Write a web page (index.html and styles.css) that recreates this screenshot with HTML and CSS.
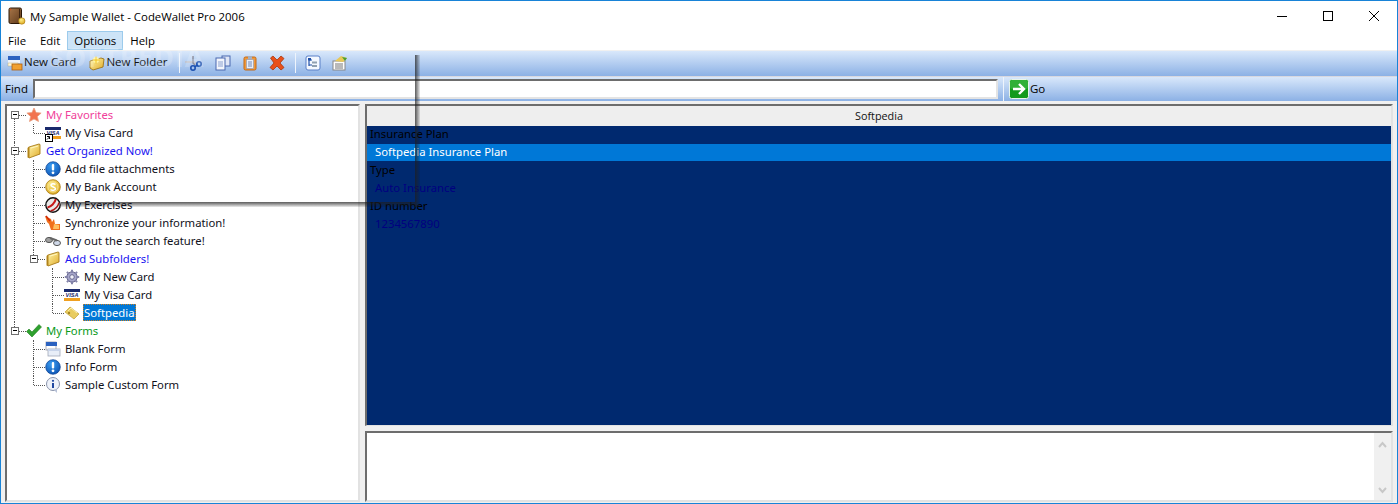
FILE: index.html
```html
<!DOCTYPE html>
<html lang="en">
<head>
<meta charset="utf-8">
<title>My Sample Wallet - CodeWallet Pro 2006</title>
<link rel="stylesheet" href="styles.css">
</head>
<body>
<svg class="defs" width="0" height="0" aria-hidden="true">
  <defs>
    <linearGradient id="gFolder" x1="0" y1="0" x2="1" y2="1"><stop offset="0" stop-color="#fff4a8"/><stop offset="1" stop-color="#e0ac2c"/></linearGradient>
    <linearGradient id="gWallet" x1="0" y1="0" x2="1" y2="1"><stop offset="0" stop-color="#a87648"/><stop offset="1" stop-color="#5e3a1c"/></linearGradient>
    <radialGradient id="gBlue" cx=".4" cy=".3" r=".8"><stop offset="0" stop-color="#3a9cf0"/><stop offset="1" stop-color="#0a4fb0"/></radialGradient>
    <radialGradient id="gCoin" cx=".4" cy=".3" r=".8"><stop offset="0" stop-color="#fff08a"/><stop offset="1" stop-color="#d8a016"/></radialGradient>
    <symbol id="i-star" viewBox="0 0 16 16"><path d="M8 1l2.100 4.600 5 .5-3.700 3.400 1.100 5L8 12l-4.500 2.500 1.100-5L.9 6.100l5-.5z" fill="#f2744f" stroke="#e8a080" stroke-width=".8"/></symbol>
    <symbol id="i-visa" viewBox="0 0 16 16"><rect y="2" width="16" height="12" fill="#fff"/><rect y="2" width="16" height="3" fill="#1a2a6c"/><rect y="11" width="16" height="3" fill="#f0a020"/><text x="8" y="10" font-size="5.500" font-weight="700" font-style="italic" text-anchor="middle" fill="#1a2a6c" font-family="Liberation Sans, sans-serif">VISA</text></symbol>
    <symbol id="i-shortcut" viewBox="0 0 8 8"><rect x=".5" y=".5" width="7" height="7" fill="#fff" stroke="#000"/><path d="M2.500 6V3.500h2.500M3 3.500L5.500 6" transform="rotate(90 4 4)" fill="none" stroke="#000"/></symbol>
    <symbol id="i-folder" viewBox="0 0 16 16"><path d="M1.500 5L3 3.500V15l-1.500-.5z" fill="#b98a1c"/><path d="M3 4l10-3 1 .5V11L3 15z" fill="url(#gFolder)" stroke="#a87c18" stroke-width=".9"/><path d="M5 5l7-2" stroke="#fff6c0"/></symbol>
    <symbol id="i-bang" viewBox="0 0 16 16"><circle cx="8" cy="8" r="7.300" fill="url(#gBlue)" stroke="#0a3f90" stroke-width=".7"/><rect x="6.800" y="3" width="2.400" height="6.500" rx="1" fill="#fff"/><circle cx="8" cy="11.800" r="1.400" fill="#fff"/></symbol>
    <symbol id="i-coin" viewBox="0 0 16 16"><circle cx="8" cy="8" r="7.300" fill="url(#gCoin)" stroke="#a87810" stroke-width=".8"/><circle cx="8" cy="8" r="5" fill="none" stroke="#f8e090"/><path d="M10.500 5.500C9 4.300 6 4.500 6 6.300S10.500 8 10.500 9.800 7 11.800 5.500 10.500" fill="none" stroke="#fff" stroke-width="1.600"/></symbol>
    <symbol id="i-ball" viewBox="0 0 16 16"><circle cx="8" cy="8" r="7.200" fill="#e8e8e8" stroke="#111" stroke-width="1.400"/><path d="M2.500 10.500C6 10 10 6 10.800 2" fill="none" stroke="#c81818" stroke-width="2"/><path d="M5.500 14C9 13 13 10 14 5.500" fill="none" stroke="#b01818" stroke-width="1.400"/></symbol>
    <symbol id="i-sync" viewBox="0 0 16 16"><path d="M0 1l6 3 1 3 2-3 1 5 5 0 0 6H6L4 9 2 7z" fill="#f0701c"/><path d="M9 9l5 1v4H8z" fill="#ffc060"/><path d="M1 1l4 5" stroke="#d02808" stroke-width="1.500"/></symbol>
    <symbol id="i-search" viewBox="0 0 16 16"><ellipse cx="4" cy="7" rx="3.500" ry="2.600" fill="#a0a0a0" stroke="#555"/><ellipse cx="12" cy="10" rx="3.500" ry="2.600" fill="#cfd8e8" stroke="#555"/><path d="M5 5l7 2.500" stroke="#666" stroke-width="2.200"/></symbol>
    <symbol id="i-gear" viewBox="0 0 16 16"><circle cx="8" cy="8" r="5.200" fill="#a8a8cc" stroke="#6a6a90"/><path d="M8 .8v3M8 12.200v3M.8 8h3M12.200 8h3M2.900 2.900l2.200 2.200M10.900 10.900l2.200 2.200M13.100 2.900l-2.200 2.200M5.100 10.900l-2.200 2.200" stroke="#8484aa" stroke-width="2"/><circle cx="8" cy="8" r="2.300" fill="#f0f0f8" stroke="#6a6a90"/></symbol>
    <symbol id="i-tag" viewBox="0 0 16 16"><path d="M1 7l5-5 9 7-5 5z" fill="#e8cc60" stroke="#c8a840" stroke-width=".8"/><path d="M4 6l3-3 6 5" fill="none" stroke="#fff0a8"/><circle cx="5" cy="8" r="1.200" fill="#a88820"/></symbol>
    <symbol id="i-check" viewBox="0 0 16 16"><path d="M.5 8.500L3 6l3 3 7-7.500L15.500 4 6 14z" fill="#2ea02e" stroke="#1e801e" stroke-width=".6"/></symbol>
    <symbol id="i-form" viewBox="0 0 16 16"><rect x="1" y="1" width="10" height="8" fill="#fff" stroke="#9a9aa8" stroke-width=".8"/><rect x="1" y="1" width="11" height="4" fill="#2c62c0"/><rect x="3" y="8" width="12" height="7" fill="#e8eef8" stroke="#a0a8b8" stroke-width=".8"/><rect x="3" y="8" width="12" height="2" fill="#c8d4ea"/></symbol>
    <symbol id="i-bubble" viewBox="0 0 16 16"><circle cx="8" cy="7" r="6.500" fill="#eef2fa" stroke="#8a94ac"/><path d="M9 13l3 3v-4z" fill="#b8c2d8"/><rect x="7" y="6" width="2" height="5" fill="#2048a0"/><circle cx="8" cy="3.800" r="1.100" fill="#2048a0"/></symbol>
    <symbol id="i-card" viewBox="0 0 16 16"><rect x="1" y="1" width="12" height="4" fill="#2c62c0"/><rect x="1" y="5" width="12" height="3" fill="#eef2f8"/><rect x="1" y="8" width="10" height="3" fill="#fff8d8" stroke="#b0a070" stroke-width=".4"/><rect x="5" y="9" width="10" height="6" fill="#f0a030" stroke="#b06010" stroke-width=".8"/></symbol>
    <symbol id="i-newfolder" viewBox="0 0 16 16"><path d="M1 6l11-3 3 1-1 8-10 3-3-2z" fill="url(#gFolder)" stroke="#9c7418" stroke-width=".9"/><circle cx="7" cy="5" r="3" fill="#fff6a0"/><path d="M7 1.500v7M3.500 5h7" stroke="#f0c020"/></symbol>
    <symbol id="i-cut" viewBox="0 0 18 16"><path d="M0 7h9l3 2" fill="none" stroke="#c0c4d0" stroke-width="2"/><path d="M8 1v7l2 2" fill="none" stroke="#8a90a0" stroke-width="1.500"/><circle cx="8" cy="13" r="2.200" fill="none" stroke="#1c50b0" stroke-width="1.600"/><circle cx="14" cy="9" r="2.200" fill="none" stroke="#1c50b0" stroke-width="1.600"/><path d="M9.500 11.500l3-1" stroke="#1c50b0" stroke-width="1.500"/></symbol>
    <symbol id="i-copy" viewBox="0 0 16 16"><rect x="7" y="1" width="8" height="10" fill="#dfe6f6" stroke="#4a68b0"/><rect x="1" y="3" width="9" height="12" fill="#f2f5fc" stroke="#4a68b0"/><path d="M3 7h5M3 9h5M3 11h5" stroke="#8aa0d0"/></symbol>
    <symbol id="i-paste" viewBox="0 0 16 16"><rect x="2" y="2" width="12" height="13" rx="1.500" fill="#f09838" stroke="#c06818"/><rect x="4.500" y="4.500" width="7" height="9" fill="#e8eef8" stroke="#8a98b8" stroke-width=".6"/><rect x="6" y="1" width="4" height="3" fill="#a8b0c0"/><path d="M6 7h4M6 9h4M6 11h4" stroke="#7088b8"/></symbol>
    <symbol id="i-del" viewBox="0 0 16 16"><path d="M1.500 3L4 1l4 4 4-4 3 2.500-4 4.500 4 4.500-3 2.500-4-4-4 4L1 12.500 5 8z" fill="#e8501c" stroke="#a83810" stroke-width=".8"/></symbol>
    <symbol id="i-view" viewBox="0 0 16 16"><rect x="1" y="1" width="14" height="14" rx="2" fill="#f4f8ff" stroke="#5a80c8"/><path d="M4 4v7M4 5h3M4 10h3" stroke="#2050a8" stroke-width="1.200"/><rect x="3" y="3" width="3" height="2.400" fill="#2050a8"/><rect x="7" y="6.500" width="5" height="2" fill="#90a0b0"/><rect x="7" y="10" width="5" height="2" fill="#90a0b0"/></symbol>
    <symbol id="i-props" viewBox="0 0 16 16"><rect x="1" y="6" width="12" height="9" fill="#fdfdfd" stroke="#888"/><path d="M3 9h8M3 11h8M3 13h8" stroke="#777"/><path d="M3 6l6-5 6 2-4 4z" fill="#e8c858"/><path d="M10 2l5 1-2 3z" fill="#4ca030"/></symbol>
    <symbol id="i-wallet" viewBox="0 0 18 18"><path d="M1 2.500Q1 1 2.500 1H12q1.500 0 1.500 1.500V15q0 1.500-1.500 1.500H2.500Q1 16.500 1 15z" fill="url(#gWallet)" stroke="#2c1808"/><path d="M1.500 2.500L3 1.500v2z" fill="#e04818"/><path d="M11.500 2v14" stroke="#3e2410"/><circle cx="13.800" cy="14" r="3.200" fill="url(#gCoin)" stroke="#a87810" stroke-width=".6"/></symbol>
  </defs>
</svg>

<div class="window">
  <header class="titlebar">
    <svg class="wallet"><use href="#i-wallet"/></svg>
    <span class="title">My Sample Wallet - CodeWallet Pro 2006</span>
    <div class="controls">
      <svg class="ctl" viewBox="0 0 46 30"><path d="M18 15.500h10" stroke="#000" fill="none"/></svg>
      <svg class="ctl" viewBox="0 0 46 30"><rect x="18.500" y="10.500" width="9" height="9" stroke="#000" fill="none"/></svg>
      <svg class="ctl" viewBox="0 0 46 30"><path d="M18 10l10 10M28 10L18 20" stroke="#000" fill="none"/></svg>
    </div>
  </header>
  <nav class="menubar">
    <span class="menu">File</span>
    <span class="menu">Edit</span>
    <span class="menu active">Options</span>
    <span class="menu">Help</span>
  </nav>
  <div class="toolbar">
    <span class="tool first"><svg class="ic"><use href="#i-card"/></svg><span class="tool-txt">New Card</span></span>
    <span class="tool"><svg class="ic"><use href="#i-newfolder"/></svg><span class="tool-txt">New Folder</span></span>
    <i class="sep"></i>
    <svg class="ic tb wide"><use href="#i-cut"/></svg>
    <svg class="ic tb"><use href="#i-copy"/></svg>
    <svg class="ic tb"><use href="#i-paste"/></svg>
    <svg class="ic tb"><use href="#i-del"/></svg>
    <i class="sep sep2"></i>
    <svg class="ic tb"><use href="#i-view"/></svg>
    <svg class="ic tb"><use href="#i-props"/></svg>
    <span class="watermark">SOFTPEDIA</span>
  </div>
  <div class="findbar">
    <label class="find-label" for="find">Find</label>
    <input id="find" class="find-input" type="text">
    <i class="sep find-sep"></i>
    <svg class="go-ic" viewBox="0 0 20 20"><rect x=".5" y=".5" width="19" height="19" rx="2" fill="#139a1c" stroke="#e8f4e8"/><rect x="1" y="1" width="18" height="9" rx="2" fill="#30b038"/><path d="M4 10h10M10 5l5 5-5 5" fill="none" stroke="#fff" stroke-width="2.400"/></svg>
    <span class="go">Go</span>
  </div>
  <main class="content">
    <section class="panel tree-panel">
      <ul class="tree">
        <li><div class="row"><i class="box"></i><svg class="ic"><use href="#i-star"/></svg><span class="lbl pink">My Favorites</span></div>
          <ul>
            <li><div class="row"><span class="ic-wrap"><svg class="ic"><use href="#i-visa"/></svg><svg class="badge"><use href="#i-shortcut"/></svg></span><span class="lbl">My Visa Card</span></div></li>
          </ul>
        </li>
        <li><div class="row"><i class="box"></i><svg class="ic"><use href="#i-folder"/></svg><span class="lbl blue">Get Organized Now!</span></div>
          <ul>
            <li><div class="row"><svg class="ic"><use href="#i-bang"/></svg><span class="lbl">Add file attachments</span></div></li>
            <li><div class="row"><svg class="ic"><use href="#i-coin"/></svg><span class="lbl">My Bank Account</span></div></li>
            <li><div class="row"><svg class="ic"><use href="#i-ball"/></svg><span class="lbl">My Exercises</span></div></li>
            <li><div class="row"><svg class="ic"><use href="#i-sync"/></svg><span class="lbl">Synchronize your information!</span></div></li>
            <li><div class="row"><svg class="ic"><use href="#i-search"/></svg><span class="lbl">Try out the search feature!</span></div></li>
            <li><div class="row"><i class="box"></i><svg class="ic"><use href="#i-folder"/></svg><span class="lbl blue">Add Subfolders!</span></div>
              <ul>
                <li><div class="row"><svg class="ic"><use href="#i-gear"/></svg><span class="lbl">My New Card</span></div></li>
                <li><div class="row"><svg class="ic"><use href="#i-visa"/></svg><span class="lbl">My Visa Card</span></div></li>
                <li><div class="row"><svg class="ic"><use href="#i-tag"/></svg><span class="lbl selected">Softpedia</span></div></li>
              </ul>
            </li>
          </ul>
        </li>
        <li><div class="row"><i class="box"></i><svg class="ic"><use href="#i-check"/></svg><span class="lbl green">My Forms</span></div>
          <ul>
            <li><div class="row"><svg class="ic"><use href="#i-form"/></svg><span class="lbl">Blank Form</span></div></li>
            <li><div class="row"><svg class="ic"><use href="#i-bang"/></svg><span class="lbl">Info Form</span></div></li>
            <li><div class="row"><svg class="ic"><use href="#i-bubble"/></svg><span class="lbl">Sample Custom Form</span></div></li>
          </ul>
        </li>
      </ul>
    </section>
    <section class="right">
      <div class="panel card-panel">
        <div class="card-head">Softpedia</div>
        <div class="card-body">
          <div class="field">Insurance Plan</div>
          <div class="value focus">Softpedia Insurance Plan</div>
          <div class="field">Type</div>
          <div class="value">Auto Insurance</div>
          <div class="field">ID number</div>
          <div class="value">1234567890</div>
        </div>
      </div>
      <div class="panel notes">
        <div class="notes-text"></div>
        <div class="scroll">
          <svg class="chev" viewBox="0 0 9 7"><path d="M1 6l3.500-4L8 6" fill="none" stroke="#c8c8c8" stroke-width="2"/></svg>
          <svg class="chev" viewBox="0 0 9 7"><path d="M1 1l3.500 4L8 1" fill="none" stroke="#c8c8c8" stroke-width="2"/></svg>
        </div>
      </div>
    </section>
  </main>
  <div class="ghost"></div>
</div>
</body>
</html>
```
FILE: styles.css
```css
* { box-sizing: border-box; }
html, body { margin: 0; padding: 0; height: 100%; overflow: hidden; }
body { font-family: "Open Sans", "Noto Sans", sans-serif; color: #000; background: #fff; }
.defs { position: absolute; }
.window { position: relative; width: 1398px; height: 504px; border: 1px solid #1883d7; display: flex; flex-direction: column; overflow: hidden; background: #f0f0f0; }

.titlebar { height: 30px; flex: none; background: #fff; display: flex; align-items: center; padding-left: 7px; }
.wallet { width: 18px; height: 18px; flex: none; margin-right: 4px; }
.title { font-size: 11.4px; }
.controls { margin-left: auto; display: flex; }
.ctl { width: 46px; height: 30px; display: block; }

.menubar { height: 19px; flex: none; background: #fff; display: flex; align-items: stretch; font-size: 11.4px; }
.menu { padding: 0 6px; display: flex; align-items: center; border: 1px solid transparent; }
.menu.active { background: #cde4f7; border-color: #9ccbec; }

.toolbar { position: relative; height: 26px; flex: none; border-top: 1px solid #f0f0f0; background: linear-gradient(#d9e8fb, #8cb1e5); display: flex; align-items: center; padding: 0 0 2px 6px; font-size: 11.5px; color: #111; }
.ic { width: 16px; height: 16px; flex: none; display: block; }
.tool { display: flex; align-items: center; gap: 1px; margin-right: 13px; }
.tool-txt { margin-bottom: 2px; }
.sep { width: 1px; height: 20px; background: #eef4fc; flex: none; margin-left: -1px; margin-right: -3px; }
.ic.tb { margin-left: 11px; }
.ic.tb.wide { width: 18px; margin-left: 8px; margin-right: 1px; }
.sep2 { margin-left: 10px; margin-right: -2px; }
.watermark { position: absolute; left: 48px; top: -13px; font-size: 27px; font-weight: 700; letter-spacing: 1px; color: rgba(255, 255, 255, .2); }

.findbar { height: 25px; flex: none; border-top: 1px solid #d8d8e0; background: linear-gradient(#d9e8fb, #8cb1e5); display: flex; align-items: center; padding-left: 4px; font-size: 11.5px; }
.find-label { width: 28px; flex: none; margin-bottom: 2px; }
.find-input { width: 965px; height: 20px; flex: none; padding: 0; background: #fff; border-style: solid; border-width: 2px; border-color: #6d6d6d #e4e4e4 #e4e4e4 #6d6d6d; }
.sep.find-sep { height: 24px; margin: 0 0 0 5px; }
.go-ic { width: 20px; height: 20px; flex: none; margin-left: 5px; }
.go { margin-left: 1px; margin-bottom: 2px; }

.content { flex: 1; min-height: 0; display: flex; gap: 5px; padding: 3px 4px 1px 4px; }
.panel { border-style: solid; border-width: 2px; border-color: #6d6d6d #e2e2e2 #e2e2e2 #6d6d6d; background: #fff; }
.tree-panel { width: 355px; flex: none; font-family: "Noto Sans", "Open Sans", sans-serif; font-size: 11.3px; overflow: hidden; }
.right { flex: 1; min-width: 0; display: flex; flex-direction: column; gap: 5px; }

.tree, .tree ul { list-style: none; margin: 0; padding: 0; }
.tree ul { padding-left: 19px; }
.tree li { position: relative; }
.tree li::before { content: ""; position: absolute; left: 7px; top: 0; bottom: 0; border-left: 1px dotted #555; }
.tree li:last-child::before { bottom: auto; height: 9px; }
.tree li::after { content: ""; position: absolute; left: 8px; top: 9px; width: 11px; border-top: 1px dotted #555; }
.tree > li:first-child::before { top: 9px; }
.row { position: relative; z-index: 1; height: 18px; display: flex; align-items: center; padding-left: 19px; }
.box { position: absolute; left: 4px; top: 5px; width: 8px; height: 8px; background: #fff; border: 1px solid #707070; }
.box::after { content: ""; position: absolute; left: 1px; top: 2px; width: 4px; height: 1px; background: #000; }
.lbl { margin: 0 0 2px 3px; padding: 0 1px; line-height: 17px; white-space: nowrap; color: #10101a; }
.pink { color: #f0409a; }
.blue { color: #1a14f0; }
.green { color: #0a9a1a; }
.selected { background: #0078d7; color: #fff; outline: 1px dotted #d08020; outline-offset: -1px; }
.ic-wrap { position: relative; width: 16px; height: 16px; flex: none; }
.badge { position: absolute; left: 0; bottom: -1px; width: 8px; height: 8px; }

.card-panel { height: 322px; flex: none; display: flex; flex-direction: column; border-bottom-width: 1px; }
.card-head { height: 20px; flex: none; background: #eee; text-align: center; font-size: 10.8px; line-height: 20px; color: #111; }
.card-body { flex: 1; background: #00296f; font-family: "Noto Sans", "Open Sans", sans-serif; font-size: 11.3px; }
.field { height: 18px; line-height: 15px; padding-left: 3px; color: #000; }
.value { height: 18px; line-height: 15px; padding-left: 8px; color: #000080; }
.value.focus { background: #0078d7; color: #fff; border-bottom: 1px solid #00296f; }

.notes { flex: 1; min-height: 0; display: flex; }
.notes-text { flex: 1; }
.scroll { width: 17px; flex: none; background: #f0f0f0; display: flex; flex-direction: column; justify-content: space-between; align-items: center; padding: 8px 0 6px; }
.chev { width: 9px; height: 7px; display: block; }

.ghost { position: absolute; left: 60px; top: 54px; width: 359px; height: 152px; pointer-events: none; }
.ghost::before { content: ""; position: absolute; right: 0; top: 0; bottom: 0; width: 5px; background: linear-gradient(to right, rgba(30, 30, 30, .72), rgba(30, 30, 30, .55) 30%, rgba(0, 0, 0, .08)); }
.ghost::after { content: ""; position: absolute; left: 0; right: 5px; bottom: 0; height: 5px; background: linear-gradient(rgba(30, 30, 30, .72), rgba(30, 30, 30, .55) 30%, rgba(0, 0, 0, .08)); }
```
